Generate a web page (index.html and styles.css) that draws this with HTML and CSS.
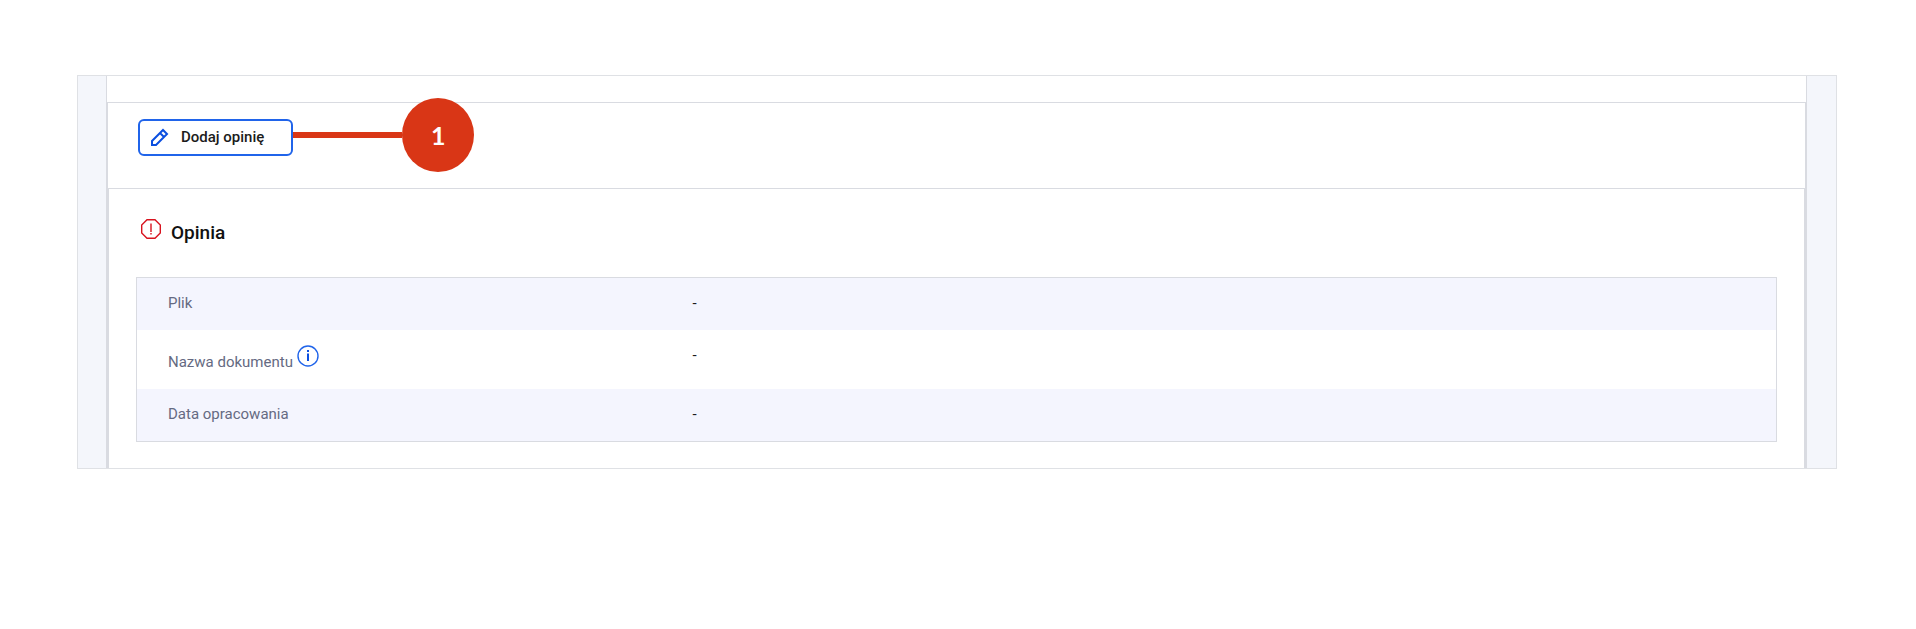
FILE: index.html
```html
<!DOCTYPE html>
<html lang="pl">
<head>
    <meta charset="UTF-8">
    <meta name="viewport" content="width=device-width, initial-scale=1.0">
    <title>Opinia</title>
    <link rel="stylesheet" href="styles.css">
</head>
<body>
    <main class="frame">
        <div class="page">
            <section class="panel">
                <div class="toolbar">
                    <div class="callout-anchor">
                        <button type="button" class="add-button">
                            <svg class="pencil-icon" viewBox="0 0 18 18" aria-hidden="true">
                                <path d="M1 17v-4L12 2l4 4L5 17zM9 5l4 4"/>
                            </svg>
                            Dodaj opinię
                        </button>
                        <div class="callout">
                            <span class="callout-line"></span>
                            <span class="callout-number">1</span>
                        </div>
                    </div>
                </div>

                <div class="card">
                    <h2 class="card-title">
                        <svg class="alert-icon" viewBox="0 0 20 20" aria-hidden="true">
                            <path d="M6 .7h8L19.3 6v8L14 19.3H6L.7 14V6z"/>
                            <path class="mark" d="M10 4.5v8.500M10 14v1.500"/>
                        </svg>
                        <span>Opinia</span>
                    </h2>

                    <table class="details">
                        <tbody>
                            <tr>
                                <th scope="row">Plik</th>
                                <td>-</td>
                            </tr>
                            <tr>
                                <th scope="row">
                                    Nazwa dokumentu
                                    <button type="button" class="info-button" aria-label="Informacja">
                                        <svg viewBox="0 0 22 22" aria-hidden="true">
                                            <circle class="ring" cx="11" cy="11" r="10"/>
                                            <path d="M10 8.500h2V16h-2zM10 5h2v2h-2z"/>
                                        </svg>
                                    </button>
                                </th>
                                <td>-</td>
                            </tr>
                            <tr>
                                <th scope="row">Data opracowania</th>
                                <td>-</td>
                            </tr>
                        </tbody>
                    </table>
                </div>
            </section>
        </div>
    </main>
</body>
</html>
```
FILE: styles.css
```css
* {
    box-sizing: border-box;
}
body {
    margin: 0;
    background-color: #fff;
    color: #1b1b1b;
    font-family: Roboto, "Liberation Sans", sans-serif;
    font-size: 15px;
    line-height: 20px;
}
button {
    font: inherit;
    cursor: pointer;
}
.frame {
    margin: 75px 79px 75px 77px;
    padding: 0 29px 0 28px;
    border: 1px solid #dfe1e5;
    background-color: #f4f6fb;
}
.page {
    padding-top: 26px;
    border: solid #d9dbe1;
    border-width: 0 1px;
    background-color: #fff;
}
.panel {
    border: solid #d9dbe1;
    border-width: 1px 1px 0;
}
.toolbar {
    display: flex;
    padding: 16px 30px 32px;
}

/* Add button with the numbered marker */
.callout-anchor {
    position: relative;
}
.add-button {
    display: flex;
    align-items: center;
    gap: 12px;
    height: 37px;
    padding: 0 27px 2px 11px;
    border: 2px solid #2064ea;
    border-radius: 6px;
    background-color: #fff;
    color: #1b1b1b;
    font-weight: 500;
}
.pencil-icon {
    width: 18px;
    height: 18px;
    fill: none;
    stroke: #0b4fe0;
    stroke-width: 2;
}
.callout {
    position: absolute;
    top: 16px;
    left: 100%;
    display: flex;
    align-items: center;
    transform: translateY(-50%);
}
.callout-line {
    width: 109px;
    height: 6px;
    background-color: #d93616;
}
.callout-number {
    width: 72px;
    height: 74px;
    border-radius: 50%;
    background-color: #d93616;
    color: #fff;
    font-family: Lato, sans-serif;
    font-size: 25px;
    font-weight: bold;
    line-height: 74px;
    text-align: center;
}

.card {
    padding: 28px 27px 26px;
    border: solid #d9dbe1;
    border-width: 1px 1px 0;
}
.card-title {
    display: flex;
    align-items: flex-start;
    gap: 10px;
    margin: 0 0 30px;
    padding: 2px 5px 0;
    color: #111;
    font-size: 19px;
    font-weight: 500;
    line-height: 28px;
}
.alert-icon {
    width: 20px;
    height: 20px;
    fill: none;
    stroke: #d8131f;
    stroke-width: 1.4;
}
.details {
    width: 100%;
    border: 1px solid #d9dbe1;
    border-spacing: 0;
}
.details tr:nth-child(odd) {
    background-color: #f4f5fe;
}
.details th,
.details td {
    padding: 15px 31px 17px;
    text-align: left;
    vertical-align: top;
}
.details th {
    width: 32%;
    color: #656a82;
    font-weight: 400;
}
.info-button {
    padding: 0;
    border: 0;
    background: none;
    vertical-align: baseline;
}
.info-button svg {
    display: block;
    width: 22px;
    height: 22px;
    fill: #0b4fe0;
}
.info-button .ring {
    fill: none;
    stroke: #2064ea;
    stroke-width: 1.4;
}
```
